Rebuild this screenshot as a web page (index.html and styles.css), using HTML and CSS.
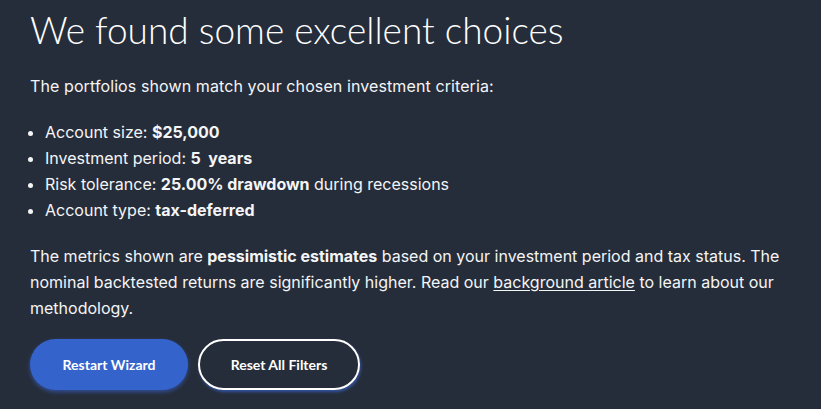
FILE: index.html
```html
<!DOCTYPE html>
<html lang="en">
<head>
<meta charset="utf-8">
<title>Results</title>
<link rel="stylesheet" href="styles.css">
</head>
<body>
<main class="page">
  <h1 class="title">We found some excellent choices</h1>
  <p class="intro">The portfolios shown match your chosen investment criteria:</p>
  <ul class="criteria">
    <li>Account size: <strong>$25,000</strong></li>
    <li>Investment period: <strong>5&nbsp; years</strong></li>
    <li>Risk tolerance: <strong>25.00% drawdown</strong> during recessions</li>
    <li>Account type: <strong>tax-deferred</strong></li>
  </ul>
  <p class="note">The metrics shown are <strong>pessimistic estimates</strong> based on your investment period and tax status. The nominal backtested returns are significantly higher. Read our <a href="#" class="link">background article</a> to learn about our methodology.</p>
  <div class="actions">
    <button class="btn btn-primary" type="button">Restart Wizard</button>
    <button class="btn btn-outline" type="button">Reset All Filters</button>
  </div>
</main>
</body>
</html>
```

FILE: styles.css
```css
html, body {
  margin: 0;
  padding: 0;
  background: #262d3a;
  height: 100%;
}
body {
  font-family: "Inter", "Noto Sans", sans-serif;
  color: #f4f5f7;
}
.page {
  padding: 6px 30px 0 30px;
  max-width: 765px;
}
.title {
  font-family: "Lato", "Noto Sans", sans-serif;
  font-weight: 300;
  font-size: 37px;
  line-height: 48px;
  margin: 0;
  color: #ffffff;
}
.intro,
.note,
.criteria {
  font-size: 16px;
  line-height: 26px;
}
.intro {
  margin: 19px 0 0 0;
  letter-spacing: 0.1px;
}
.criteria {
  margin: 20px 0 0 0;
  padding-left: 15px;
}
.criteria strong,
.note strong {
  font-weight: 700;
}
.note {
  margin: 20px 0 0 0;
}
.link {
  color: inherit;
  text-decoration: underline;
  text-underline-offset: 2px;
}
.actions {
  display: flex;
  gap: 10px;
  margin-top: 18px;
}
.btn {
  font-family: "Lato", "Noto Sans", sans-serif;
  font-weight: 700;
  font-size: 14px;
  color: #ffffff;
  height: 51px;
  border-radius: 26px;
  cursor: pointer;
}
.btn-primary {
  width: 158px;
  background: #3563cc;
  border: none;
  box-shadow: 0 2px 4px rgba(60, 110, 230, 0.55);
}
.btn-outline {
  width: 162px;
  background: transparent;
  border: 2px solid #ffffff;
  box-shadow: 1px 2px 3px rgba(60, 110, 230, 0.6);
}
```
